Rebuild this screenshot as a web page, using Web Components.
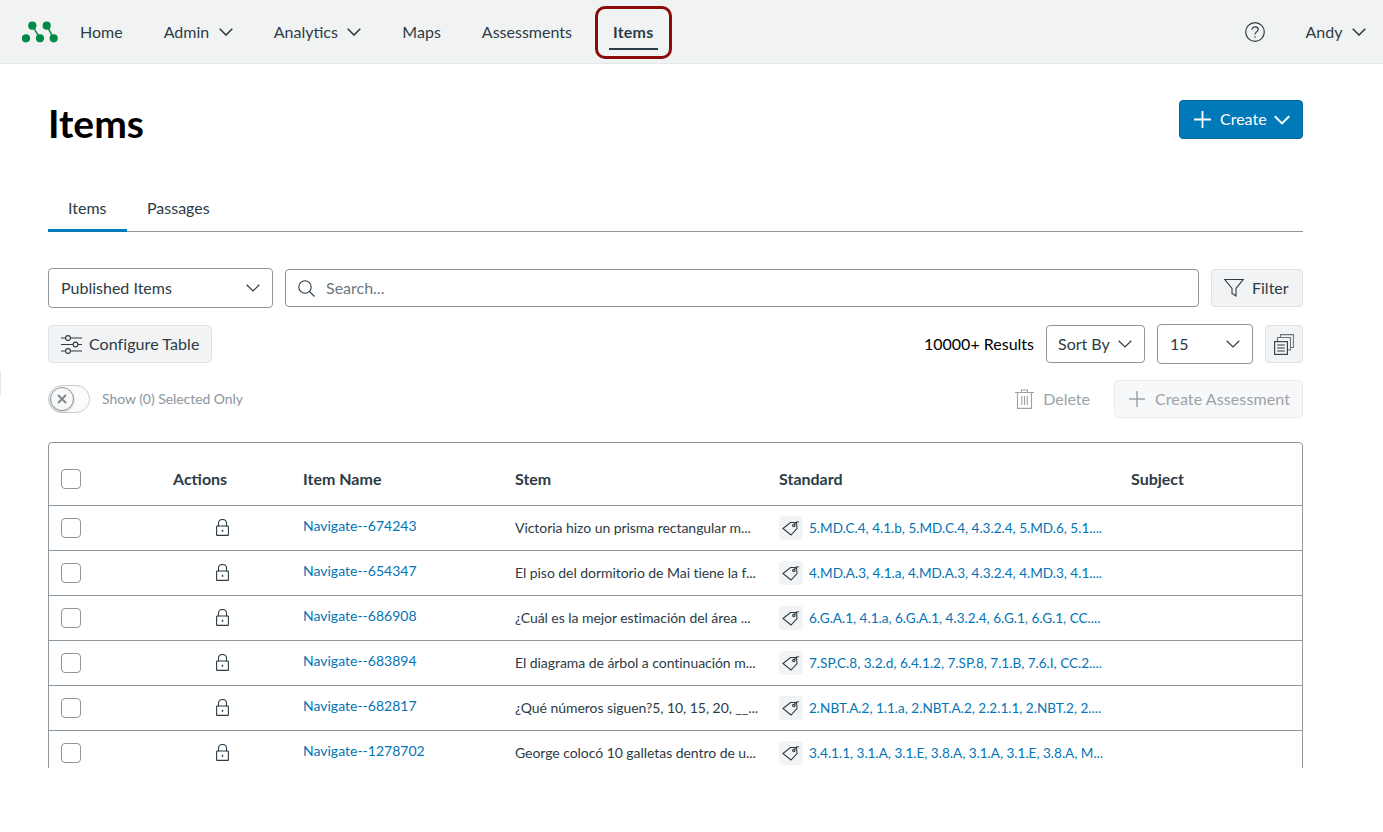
<!DOCTYPE html>
<html lang="en">
<head>
<meta charset="utf-8">
<title>Items</title>
<style>
  html, body { margin: 0; height: 100%; background: #fff; overflow: hidden; }
  body { font-family: Lato, "Noto Sans", sans-serif; font-size: 16px; color: #2d3b45; }
</style>
</head>
<body>
<app-shell>
  <top-nav></top-nav>
  <page-head title="Items"></page-head>
  <tab-bar></tab-bar>
  <filter-bar></filter-bar>
  <table-tools></table-tools>
  <select-bar></select-bar>
  <items-table></items-table>
</app-shell>

<script>
const chevron = (w = 14, sw = 1.6) => `<svg width="${w}" height="${Math.round(w * 0.6)}" viewBox="0 0 14 8" fill="none" stroke="currentColor" stroke-width="${sw}"><path d="M.7.8 7 7l6.3-6.2"/></svg>`;

// .t lifts a label 1px, the reference baseline sits a bit higher
const BTN_STYLE = `
  .btn {
    display: inline-flex; align-items: center; box-sizing: border-box; height: 38px;
    background: #f1f3f4; border: 1px solid #dfe3e6; border-radius: 4px; color: #2d3b45;
    font-size: 16px; white-space: nowrap;
  }
  .t { margin-bottom: 2px; }
`;

class AppShell extends HTMLElement {
  constructor() {
    super();
    this.attachShadow({ mode: 'open' });
    this.shadowRoot.innerHTML = `
      <style>
        :host { display: block; position: relative; height: 768px; overflow: hidden; }
        .edge { position: absolute; left: 0; top: 372px; width: 1px; height: 23px; background: #e3e7ea; }
      </style>
      <slot></slot>
      <div class="edge"></div>
    `;
  }
}

class NavLink extends HTMLElement {
  constructor() {
    super();
    this.attachShadow({ mode: 'open' });
  }

  connectedCallback() {
    const menu = this.hasAttribute('menu');
    this.shadowRoot.innerHTML = `
      <style>
        :host { display: inline-flex; align-items: center; position: relative; height: 64px; color: #2d3b45; font-size: 16px; }
        svg { margin-left: 9.5px; }
        :host([active]) { font-weight: 700; letter-spacing: .25px; }
        .mark { position: absolute; left: -4px; right: -4px; top: 48px; height: 2px; background: #2d3b45; }
        .ring { position: absolute; left: -18px; right: -18px; top: 6px; height: 53px; box-sizing: border-box; border: 3px solid #8b0a0a; border-radius: 10px; }
      </style>
      <slot></slot>${menu ? chevron() : ''}
      ${this.hasAttribute('active') ? '<span class="mark"></span><span class="ring"></span>' : ''}
    `;
  }
}

class TopNav extends HTMLElement {
  constructor() {
    super();
    this.attachShadow({ mode: 'open' });
    this.shadowRoot.innerHTML = `
      <style>
        :host { display: flex; align-items: center; box-sizing: border-box; height: 64px; padding: 0 17px 0 22px; background: #f1f3f3; border-bottom: 1px solid #e4e7e9; }
        .logo { width: 36px; height: 22px; margin-right: 22px; }
        .links { display: flex; gap: 41px; flex: 1; }
        .help { margin-right: 40.5px; color: #2d3b45; }
      </style>
      <svg class="logo" viewBox="0 0 36 22" fill="#008a47">
        <path d="M10.300 4.700 18 17.300M24.700 4.700 31.700 17.300" fill="none" stroke="#008a47" stroke-width="1.500"/>
        <circle cx="10.300" cy="4.700" r="4.100"/><circle cx="24.700" cy="4.700" r="4.100"/>
        <circle cx="4" cy="17.300" r="4.100"/><circle cx="18" cy="17.300" r="4.100"/><circle cx="31.700" cy="17.300" r="4.100"/>
      </svg>
      <div class="links">
        <nav-link>Home</nav-link>
        <nav-link menu>Admin</nav-link>
        <nav-link menu>Analytics</nav-link>
        <nav-link>Maps</nav-link>
        <nav-link>Assessments</nav-link>
        <nav-link active>Items</nav-link>
      </div>
      <svg class="help" width="20" height="20" viewBox="0 0 20 20" fill="none" stroke="currentColor" stroke-width="1.200">
        <circle cx="10" cy="10" r="9.300"/>
        <path d="M6.900 7.800c0-1.900 1.400-3 3.200-3s3.100 1.100 3.100 2.700c0 2.400-3.200 2.400-3.200 5"/>
        <circle cx="10" cy="15" r=".8" fill="currentColor" stroke="none"/>
      </svg>
      <nav-link menu>Andy</nav-link>
    `;
  }
}

class PageHead extends HTMLElement {
  constructor() {
    super();
    this.attachShadow({ mode: 'open' });
  }

  connectedCallback() {
    this.shadowRoot.innerHTML = `
      <style>
        :host { display: flex; justify-content: space-between; align-items: flex-start; height: 127px; padding: 36px 80px 0 48px; box-sizing: border-box; }
        h1 { margin: -1px 0 0; font-size: 39px; line-height: 48px; font-weight: 700; color: #000; }
        .create {
          display: inline-flex; align-items: center; box-sizing: border-box; width: 124px; height: 39px; padding-left: 14px;
          background: #0079b8; border: 1px solid #00689f; border-radius: 4px; color: #fff; font-size: 16px;
        }
        .create span { margin: 0 7px 2px 9px; }
      </style>
      <h1>${this.getAttribute('title')}</h1>
      <div class="create">
        <svg width="17" height="17" viewBox="0 0 16 16" stroke="currentColor" stroke-width="1.700"><path d="M8 0v16M0 8h16"/></svg>
        <span>Create</span>${chevron(16, 1.800)}
      </div>
    `;
  }
}

class TabBar extends HTMLElement {
  constructor() {
    super();
    this.attachShadow({ mode: 'open' });
    this.shadowRoot.innerHTML = `
      <style>
        :host { display: flex; height: 41px; margin: 0 80px 0 48px; border-bottom: 1px solid #8b969e; box-sizing: border-box; }
        div { box-sizing: border-box; height: 41px; padding: 7px 20px 0; font-size: 16px; line-height: 20px; color: #2d3b45; }
        .on { width: 79px; border-bottom: 3px solid #0079b8; }
      </style>
      <div class="on">Items</div><div>Passages</div>
    `;
  }
}

class UiSelect extends HTMLElement {
  constructor() {
    super();
    this.attachShadow({ mode: 'open' });
    this.shadowRoot.innerHTML = `
      <style>
        :host { display: flex; align-items: center; justify-content: space-between; box-sizing: border-box; height: 40px; padding: 0 12px; background: #fff; border: 1px solid #8b969e; border-radius: 4px; font-size: 16px; color: #2d3b45; white-space: nowrap; }
        svg { display: block; }
        span { margin-bottom: 2px; }
      </style>
      <span><slot></slot></span>${chevron(14, 1.200)}
    `;
  }
}

class FilterBar extends HTMLElement {
  constructor() {
    super();
    this.attachShadow({ mode: 'open' });
    this.shadowRoot.innerHTML = `
      <style>
        ${BTN_STYLE}
        :host { display: flex; align-items: center; gap: 12px; height: 40px; margin: 36px 80px 0 48px; }
        ui-select { width: 225px; flex: none; }
        .search { flex: 1; display: flex; align-items: center; box-sizing: border-box; height: 38px; padding-left: 12px; border: 1px solid #8b969e; border-radius: 4px; color: #6b7780; }
        .search svg { margin-right: 11px; color: #2d3b45; }
        .filter { width: 92px; padding-left: 12px; flex: none; }
        .filter svg { margin-right: 8px; }
      </style>
      <ui-select>Published Items</ui-select>
      <div class="search">
        <svg width="17" height="17" viewBox="0 0 17 17" fill="none" stroke="currentColor" stroke-width="1.100"><circle cx="7" cy="7" r="6.200"/><path d="m11.500 11.500 5 5"/></svg>
        <span class="t">Search...</span>
      </div>
      <div class="btn filter">
        <svg width="20" height="20" viewBox="0 0 20 20" fill="none" stroke="currentColor" stroke-width="1.100"><path d="M.8 1.500h18.400L12 10.500v7.500l-4-2.500v-5z"/></svg>
        <span class="t">Filter</span>
      </div>
    `;
  }
}

class TableTools extends HTMLElement {
  constructor() {
    super();
    this.attachShadow({ mode: 'open' });
    this.shadowRoot.innerHTML = `
      <style>
        ${BTN_STYLE}
        :host { display: flex; align-items: center; height: 40px; margin: 16px 80px 0 48px; }
        .config { width: 164px; padding-left: 12px; letter-spacing: .07px; }
        .config svg { margin-right: 7px; }
        .count { margin-left: auto; margin-right: 12px; color: #000; }
        .sort { width: 99px; height: 38px; margin-right: 12px; padding-left: 11px; }
        .size { width: 96px; margin-right: 12px; }
        .view { width: 38px; justify-content: center; }
      </style>
      <div class="btn config">
        <svg width="21" height="19" viewBox="0 0 21 19" fill="none" stroke="currentColor" stroke-width="1.100">
          <path d="M0 3h4.500M9.500 3H21M0 9.500h12M17 9.500h4M0 16h4.500M9.500 16H21"/>
          <circle cx="7" cy="3" r="2.400"/><circle cx="14.500" cy="9.500" r="2.400"/><circle cx="7" cy="16" r="2.400"/>
        </svg>
        <span class="t">Configure Table</span>
      </div>
      <span class="count t">10000+ Results</span>
      <ui-select class="sort">Sort By</ui-select>
      <ui-select class="size">15</ui-select>
      <div class="btn view">
        <svg width="20" height="21" viewBox="0 0 20 21" fill="none" stroke="currentColor" stroke-width="1.100">
          <path d="M3.500 7.500V3.500h13v12.500h-3" stroke="#6b7780"/>
          <path d="M6.500 3.500V.6h13v12.900h-3" stroke="#6b7780"/>
          <rect x=".6" y="7.600" width="12.800" height="12.800"/>
          <path d="M3.200 11h7.600M3.200 14h7.600M3.200 17h7.600"/>
        </svg>
      </div>
    `;
  }
}

class SelectBar extends HTMLElement {
  constructor() {
    super();
    this.attachShadow({ mode: 'open' });
    this.shadowRoot.innerHTML = `
      <style>
        :host { display: flex; align-items: center; height: 38px; margin: 16px 80px 0 48px; color: #9aa3a9; }
        .toggle { position: relative; box-sizing: border-box; width: 42px; height: 28px; border: 1px solid #c8ced2; border-radius: 14px; background: #fbfbfb; }
        .knob { position: absolute; left: 1px; top: 1px; display: flex; align-items: center; justify-content: center; box-sizing: border-box; width: 24px; height: 24px; border: 1px solid #8b969e; border-radius: 50%; background: #f7f8f8; color: #7b868d; box-shadow: 0 1px 2px rgba(0,0,0,.2); }
        .label { margin: 0 0 2px 12px; font-size: 14px; letter-spacing: -.05px; color: #8d969c; }
        .delete { display: flex; align-items: center; margin-left: auto; margin-right: 24px; font-size: 16px; }
        .delete svg { margin-right: 9px; }
        .delete span, .assess span { margin-bottom: 2px; }
        .assess { display: flex; align-items: center; box-sizing: border-box; width: 189px; height: 38px; padding-left: 14px; background: #f7f8f9; border: 1px solid #e8ebed; border-radius: 4px; font-size: 16px; letter-spacing: .1px; }
        .assess svg { margin-right: 10px; }
      </style>
      <div class="toggle"><div class="knob">
        <svg width="10" height="10" viewBox="0 0 10 10" stroke="currentColor" stroke-width="1.800"><path d="m1 1 8 8M9 1 1 9"/></svg>
      </div></div>
      <span class="label">Show (0) Selected Only</span>
      <div class="delete">
        <svg width="19" height="20" viewBox="0 0 19 20" fill="none" stroke="currentColor" stroke-width="1.100">
          <path d="M0 3.500h19M6.500 3.500V1h6v2.500M2.500 3.500V19.400h14V3.500M6.800 7v9M9.500 7v9M12.200 7v9"/>
        </svg>
        <span>Delete</span>
      </div>
      <div class="assess">
        <svg width="16" height="16" viewBox="0 0 16 16" stroke="currentColor" stroke-width="1.500"><path d="M8 0v16M0 8h16"/></svg>
        <span>Create Assessment</span>
      </div>
    `;
  }
}

class UiCheck extends HTMLElement {
  constructor() {
    super();
    this.attachShadow({ mode: 'open' });
    this.shadowRoot.innerHTML = `
      <style>
        :host { display: block; box-sizing: border-box; width: 20px; height: 20px; border: 1px solid #8b969e; border-radius: 4px; background: #fff; }
      </style>
    `;
  }
}

class ItemRow extends HTMLElement {
  constructor() {
    super();
    this.attachShadow({ mode: 'open' });
  }

  connectedCallback() {
    this.shadowRoot.innerHTML = `
      <style>
        :host { display: grid; grid-template-columns: var(--cols); align-items: center; height: 45px; box-sizing: border-box; border-top: 1px solid #8b969e; font-size: 14px; color: #2d3b45; }
        .box { padding-left: 12px; }
        .lock { display: flex; justify-content: flex-end; padding-right: 74px; padding-bottom: 1px; }
        .name { color: #0374b5; padding-bottom: 5px; }
        .stem { white-space: nowrap; padding-bottom: 2px; letter-spacing: -.05px; }
        .std { display: flex; align-items: center; color: #0374b5; font-size: 13.55px; white-space: nowrap; }
        .std b { font-weight: 400; }
        .tag { display: flex; align-items: center; justify-content: center; width: 24px; height: 24px; margin-right: 6px; background: #f1f3f4; border-radius: 4px; color: #2d3b45; }
      </style>
      <div class="box"><ui-check></ui-check></div>
      <div class="lock">
        <svg width="13" height="17" viewBox="0 0 13 17" fill="none" stroke="#2d3b45" stroke-width="1.100">
          <path d="M2.500 7.500V4a4 3.500 0 0 1 8 0v3.500"/><rect x=".6" y="7" width="11.800" height="9.400" rx=".5"/>
          <path d="M6.500 10.800v2" stroke-width="1.400"/>
        </svg>
      </div>
      <div class="name">${this.getAttribute('name')}</div>
      <div class="stem">${this.getAttribute('stem')}</div>
      <div class="std">
        <span class="tag">
          <svg width="18" height="16" viewBox="0 0 18 16" fill="none" stroke="currentColor" stroke-width="1.100">
            <path d="M1 8.500 8.500 2.500h6l.5 6-6 6.500z"/><circle cx="11.800" cy="5.500" r="1.200"/><path d="M12 5.500c1-3 3-4.500 5-3.500"/>
          </svg>
        </span>
        <b>${this.getAttribute('std')}</b>
      </div>
      <div></div>
    `;
  }
}

const ROWS = [
  ['Navigate--674243', 'Victoria hizo un prisma rectangular m...', '5.MD.C.4, 4.1.b, 5.MD.C.4, 4.3.2.4, 5.MD.6, 5.1....'],
  ['Navigate--654347', 'El piso del dormitorio de Mai tiene la f...', '4.MD.A.3, 4.1.a, 4.MD.A.3, 4.3.2.4, 4.MD.3, 4.1....'],
  ['Navigate--686908', '¿Cuál es la mejor estimación del área ...', '6.G.A.1, 4.1.a, 6.G.A.1, 4.3.2.4, 6.G.1, 6.G.1, CC....'],
  ['Navigate--683894', 'El diagrama de árbol a continuación m...', '7.SP.C.8, 3.2.d, 6.4.1.2, 7.SP.8, 7.1.B, 7.6.I, CC.2....'],
  ['Navigate--682817', '¿Qué números siguen?5, 10, 15, 20, __...', '2.NBT.A.2, 1.1.a, 2.NBT.A.2, 2.2.1.1, 2.NBT.2, 2....'],
  ['Navigate--1278702', 'George colocó 10 galletas dentro de u...', '3.4.1.1, 3.1.A, 3.1.E, 3.8.A, 3.1.A, 3.1.E, 3.8.A, M...'],
];

class ItemsTable extends HTMLElement {
  constructor() {
    super();
    this.attachShadow({ mode: 'open' });
    this.shadowRoot.innerHTML = `
      <style>
        :host { display: block; margin: 24px 80px 0 48px; box-sizing: border-box; border: 1px solid #8b969e; border-radius: 4px; --cols: 124px 130px 212px 264px 352px 1fr; }
        .head { display: grid; grid-template-columns: var(--cols); align-items: center; box-sizing: border-box; height: 62px; padding-top: 10px; font-weight: 700; font-size: 16px; color: #2d3b45; }
        .head div:not(.box) { margin-bottom: 2px; }
        .box { padding-left: 12px; }
        .actions { text-align: right; padding-right: 76px; }
      </style>
      <div class="head">
        <div class="box"><ui-check></ui-check></div>
        <div class="actions">Actions</div>
        <div>Item Name</div><div>Stem</div><div>Standard</div><div>Subject</div>
      </div>
      <div id="rows"></div>
    `;
    const rows = this.shadowRoot.getElementById('rows');
    ROWS.forEach(([name, stem, std]) => {
      const row = document.createElement('item-row');
      row.setAttribute('name', name);
      row.setAttribute('stem', stem);
      row.setAttribute('std', std);
      rows.appendChild(row);
    });
  }
}

customElements.define('app-shell', AppShell);
customElements.define('nav-link', NavLink);
customElements.define('top-nav', TopNav);
customElements.define('page-head', PageHead);
customElements.define('tab-bar', TabBar);
customElements.define('ui-select', UiSelect);
customElements.define('filter-bar', FilterBar);
customElements.define('table-tools', TableTools);
customElements.define('select-bar', SelectBar);
customElements.define('ui-check', UiCheck);
customElements.define('item-row', ItemRow);
customElements.define('items-table', ItemsTable);
</script>
</body>
</html>
